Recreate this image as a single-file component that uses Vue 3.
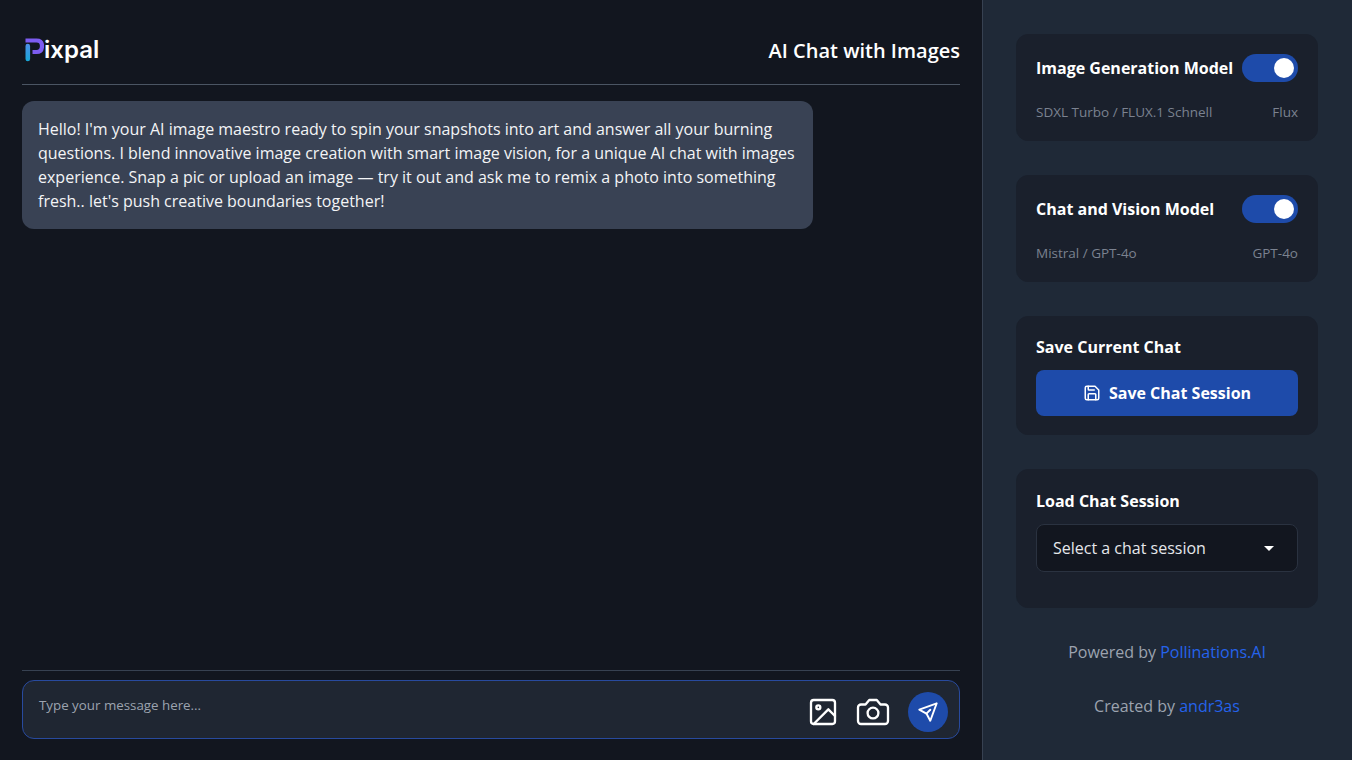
<template>
  <div class="app">
    <main class="chat">
      <header class="chat__header">
        <div class="logo">
          <svg class="logo__mark" width="19" height="24" viewBox="0 0 19 24" fill="none">
            <defs>
              <linearGradient id="stem" gradientUnits="userSpaceOnUse" x1="0" y1="6" x2="0" y2="23">
                <stop offset="0" stop-color="#4d8fe8" />
                <stop offset="1" stop-color="#18a8d8" />
              </linearGradient>
            </defs>
            <path d="M0.5 2.5H11.5C15.5 2.5 17 5 17 8C17 11.5 15.5 14 11.5 14H7.5" stroke="#7c5cf0" stroke-width="4.2" />
            <path d="M2.8 8V21" stroke="url(#stem)" stroke-width="4.6" stroke-linecap="round" />
          </svg>
          <span class="logo__text">ixpal</span>
        </div>
        <h1 class="chat__title">AI Chat with Images</h1>
      </header>

      <div class="chat__messages">
        <div class="bubble">
          Hello! I'm your AI image maestro ready to spin your snapshots into art and answer all your burning questions. I blend innovative image creation with smart image vision, for a unique AI chat with images experience. Snap a pic or upload an image — try it out and ask me to remix a photo into something fresh.. let's push creative boundaries together!
        </div>
      </div>

      <div class="composer">
        <div class="composer__box">
          <span class="composer__placeholder">Type your message here...</span>
          <div class="composer__actions">
            <svg class="icon" width="32" height="32" viewBox="0 0 24 24" fill="none" stroke="currentColor" stroke-width="1.75" stroke-linecap="round" stroke-linejoin="round">
              <rect x="3" y="3" width="18" height="18" rx="2" />
              <circle cx="8.5" cy="8.5" r="1.5" />
              <path d="M21 15l-5-5L5 21" />
            </svg>
            <svg class="icon" width="36" height="36" viewBox="0 0 24 24" fill="none" stroke="currentColor" stroke-width="1.55" stroke-linecap="round" stroke-linejoin="round">
              <path d="M14.5 4h-5L7 7H4a2 2 0 0 0-2 2v9a2 2 0 0 0 2 2h16a2 2 0 0 0 2-2V9a2 2 0 0 0-2-2h-3l-2.5-3z" />
              <circle cx="12" cy="12.7" r="3.6" />
            </svg>
            <button class="send">
              <svg width="22" height="22" viewBox="0 0 24 24" fill="none" stroke="currentColor" stroke-width="2.1" stroke-linecap="round" stroke-linejoin="round">
                <path d="M21.5 2.5L2.5 9.5l7.8 4.2 4.2 7.8 7-19z" />
                <path d="M10.3 13.7l4.2-4.2" />
              </svg>
            </button>
          </div>
        </div>
      </div>
    </main>

    <aside class="side">
      <section v-for="model in models" :key="model.title" class="card">
        <div class="card__row">
          <span class="card__title">{{ model.title }}</span>
          <span class="toggle"><span class="toggle__knob"></span></span>
        </div>
        <div class="card__row card__row--sub">
          <span>{{ model.options }}</span>
          <span>{{ model.current }}</span>
        </div>
      </section>

      <section class="card card--save">
        <div class="card__title">Save Current Chat</div>
        <button class="save">
          <svg width="18" height="18" viewBox="0 0 24 24" fill="none" stroke="currentColor" stroke-width="2" stroke-linecap="round" stroke-linejoin="round">
            <path d="M19 21H5a2 2 0 0 1-2-2V5a2 2 0 0 1 2-2h11l5 5v11a2 2 0 0 1-2 2z" />
            <path d="M17 21v-7a1 1 0 0 0-1-1H8a1 1 0 0 0-1 1v7" />
            <path d="M7 3v4a1 1 0 0 0 1 1h7" />
          </svg>
          Save Chat Session
        </button>
      </section>

      <section class="card card--load">
        <div class="card__title">Load Chat Session</div>
        <div class="select">
          <span>Select a chat session</span>
          <span class="select__caret"></span>
        </div>
      </section>

      <footer class="credits">
        <p>Powered by <a href="#">Pollinations.AI</a></p>
        <p>Created by <a href="#">andr3as</a></p>
      </footer>
    </aside>
  </div>
</template>

<script setup>
const models = [
  { title: "Image Generation Model", options: "SDXL Turbo / FLUX.1 Schnell", current: "Flux" },
  { title: "Chat and Vision Model", options: "Mistral / GPT-4o", current: "GPT-4o" },
]
</script>

<style>
html, body {
  margin: 0;
  background: #12161f;
}
</style>

<style scoped>
.app {
  display: flex;
  height: 760px;
  overflow: hidden;
  background: #12161f;
  color: #fff;
  font-family: "Open Sans", sans-serif;
}

.chat {
  width: 982px;
  box-sizing: border-box;
  padding: 0 22px;
  display: flex;
  flex-direction: column;
}

.chat__header {
  height: 85px;
  box-sizing: border-box;
  border-bottom: 1px solid #4b5563;
  display: flex;
  align-items: center;
  justify-content: space-between;
  padding: 17px 0 0 3px;
}

.logo {
  display: flex;
  align-items: center;
  margin-top: -2px;
}

.logo__mark {
  display: block;
}

.logo__text {
  font-family: Inter, sans-serif;
  font-size: 24px;
  font-weight: 600;
  line-height: 24px;
}

.chat__title {
  margin: 0;
  font-size: 20px;
  line-height: 28px;
  font-weight: 600;
}

.chat__messages {
  flex: 1;
  padding-top: 16px;
}

.bubble {
  width: 791px;
  box-sizing: border-box;
  padding: 16px;
  background: #394254;
  border-radius: 12px;
  font-size: 16px;
  line-height: 24px;
  color: #f3f4f6;
}

.composer {
  border-top: 1px solid #374151;
  padding: 9px 0 21px;
}

.composer__box {
  height: 59px;
  box-sizing: border-box;
  display: flex;
  align-items: flex-start;
  justify-content: space-between;
  background: #1f2632;
  border: 1px solid #284a9e;
  border-radius: 12px;
  padding: 0 11px 0 16px;
}

.composer__placeholder {
  font-size: 13.33px;
  line-height: 20px;
  color: #9ca3af;
  margin-top: 14px;
}

.composer__actions {
  display: flex;
  align-items: center;
  gap: 16px;
  height: 57px;
  margin-top: 2px;
}

.icon {
  color: #fff;
  display: block;
}

.send {
  width: 40px;
  height: 40px;
  margin-left: 1px;
  padding: 0;
  border: none;
  border-radius: 50%;
  background: #1e4baa;
  color: #fff;
  display: flex;
  align-items: center;
  justify-content: center;
}

.side {
  width: 370px;
  box-sizing: border-box;
  background: #1f2937;
  border-left: 1px solid #374151;
  padding: 34px 34px 0 33px;
  display: flex;
  flex-direction: column;
  gap: 34px;
}

.card {
  background: #1a202c;
  border: 1px solid #1a202c;
  border-radius: 12px;
  padding: 19px 19px 18px;
  display: flex;
  flex-direction: column;
}

.card__row {
  display: flex;
  align-items: center;
  justify-content: space-between;
  height: 28px;
}

.card__row--sub {
  margin-top: 20px;
  height: 20px;
  font-size: 13.5px;
  color: #7b8290;
}

.card__title {
  font-size: 16px;
  line-height: 24px;
  font-weight: 700;
}

.toggle {
  width: 56px;
  height: 28px;
  box-sizing: border-box;
  border-radius: 14px;
  background: #1e4baa;
  display: flex;
  align-items: center;
  justify-content: flex-end;
  padding-right: 4px;
  flex: none;
}

.toggle__knob {
  width: 20px;
  height: 20px;
  border-radius: 50%;
  background: #fff;
}

.card--save {
  padding-top: 18px;
}

.save {
  height: 46px;
  margin-top: 11px;
  border: none;
  border-radius: 8px;
  background: #1e4baa;
  color: #fff;
  font-family: inherit;
  font-size: 16px;
  font-weight: 700;
  display: flex;
  align-items: center;
  justify-content: center;
  gap: 8px;
  padding: 0;
}

.card--load {
  padding-bottom: 35px;
}

.select {
  height: 48px;
  margin-top: 11px;
  box-sizing: border-box;
  background: #12161f;
  border: 1px solid #2a3240;
  border-radius: 8px;
  padding: 0 23px 0 16px;
  display: flex;
  align-items: center;
  justify-content: space-between;
  font-size: 16px;
  color: #e5e7eb;
}

.select__caret {
  width: 0;
  height: 0;
  border-left: 5px solid transparent;
  border-right: 5px solid transparent;
  border-top: 5px solid #fff;
}

.credits {
  text-align: center;
  font-size: 16px;
  line-height: 24px;
  color: #9ca3af;
  margin-top: -2px;
}

.credits p {
  margin: 0 0 30px;
}

.credits a {
  color: #2563eb;
  text-decoration: none;
}
</style>
